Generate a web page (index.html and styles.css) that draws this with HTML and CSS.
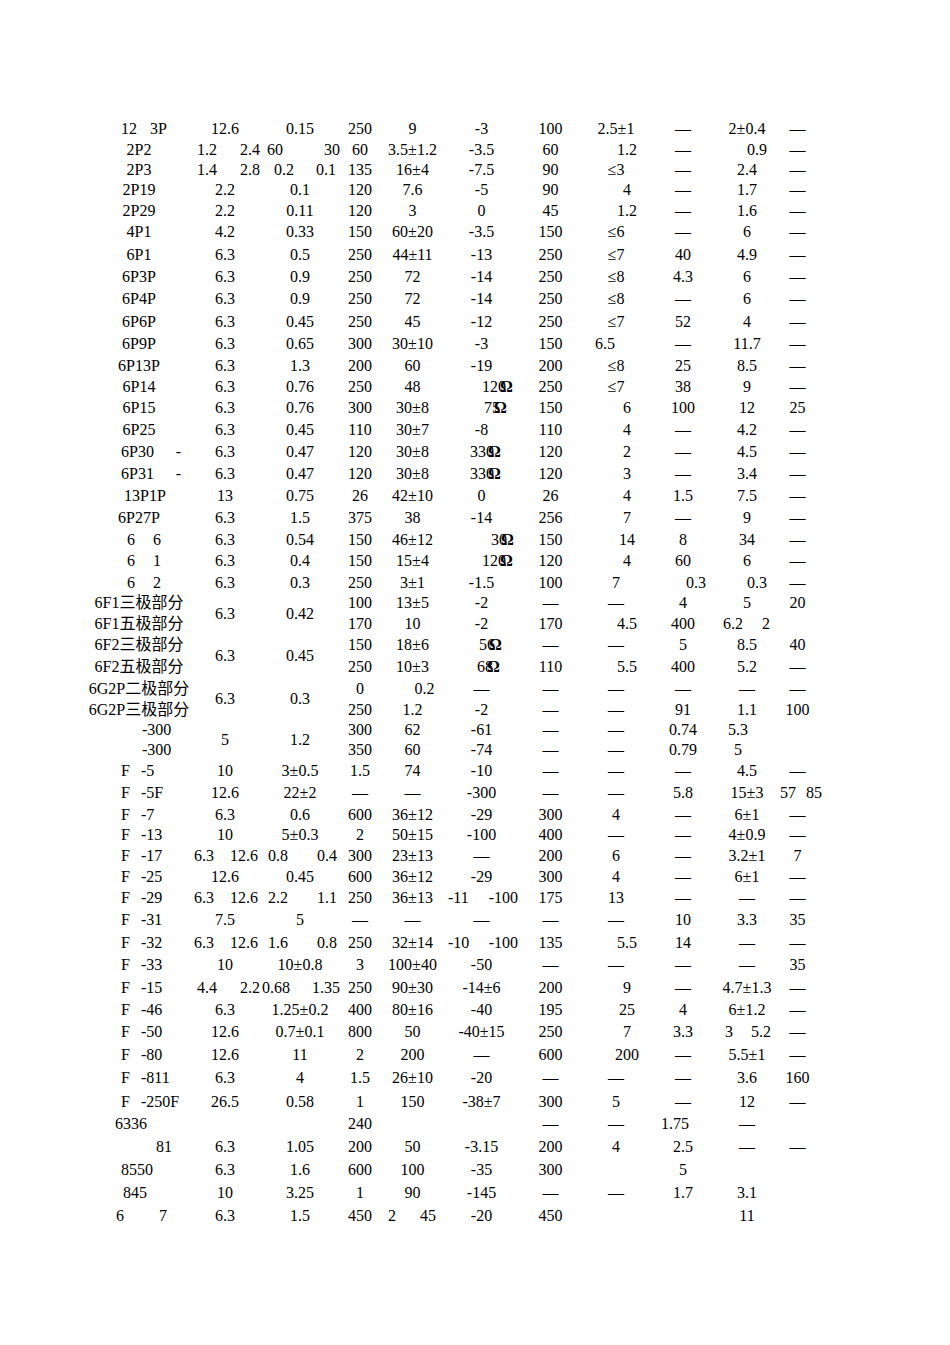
FILE: index.html
```html
<!DOCTYPE html>
<html lang="zh">
<head>
<meta charset="utf-8">
<title>电子管参数表</title>
<link rel="stylesheet" href="styles.css">
</head>
<body>
<table class="sheet">
<colgroup>
<col class="w102"><col class="w70"><col class="w80"><col class="w40"><col class="w65"><col class="w73"><col class="w65"><col class="w66"><col class="w68"><col class="w60"><col class="w41">
</colgroup>
<tbody>
<tr class="h21"><td><div class="two pl33 pr23"><span>12</span><span>3P</span></div></td><td>12.6</td><td>0.15</td><td>250</td><td>9</td><td>-3</td><td>100</td><td>2.5±1</td><td>—</td><td>2±0.4</td><td>—</td></tr>
<tr class="h21"><td>2P2</td><td><div class="two pl7"><span>1.2</span><span>2.4</span></div></td><td><div class="two pl7"><span>60</span><span>30</span></div></td><td>60</td><td>3.5±1.2</td><td>-3.5</td><td>60</td><td class="pl22">1.2</td><td>—</td><td class="pl20">0.9</td><td>—</td></tr>
<tr class="h20"><td>2P3</td><td><div class="two pl7"><span>1.4</span><span>2.8</span></div></td><td><div class="two pl14 pr4"><span>0.2</span><span>0.1</span></div></td><td>135</td><td>16±4</td><td>-7.5</td><td>90</td><td>≤3</td><td>—</td><td>2.4</td><td>—</td></tr>
<tr class="h20"><td>2P19</td><td>2.2</td><td>0.1</td><td>120</td><td>7.6</td><td>-5</td><td>90</td><td class="pl22">4</td><td>—</td><td>1.7</td><td>—</td></tr>
<tr class="h21"><td>2P29</td><td>2.2</td><td>0.11</td><td>120</td><td>3</td><td>0</td><td>45</td><td class="pl22">1.2</td><td>—</td><td>1.6</td><td>—</td></tr>
<tr class="h22"><td>4P1</td><td>4.2</td><td>0.33</td><td>150</td><td>60±20</td><td>-3.5</td><td>150</td><td>≤6</td><td>—</td><td>6</td><td>—</td></tr>
<tr class="h23"><td>6P1</td><td>6.3</td><td>0.5</td><td>250</td><td>44±11</td><td>-13</td><td>250</td><td>≤7</td><td>40</td><td>4.9</td><td>—</td></tr>
<tr class="h22"><td>6P3P</td><td>6.3</td><td>0.9</td><td>250</td><td>72</td><td>-14</td><td>250</td><td>≤8</td><td>4.3</td><td>6</td><td>—</td></tr>
<tr class="h22"><td>6P4P</td><td>6.3</td><td>0.9</td><td>250</td><td>72</td><td>-14</td><td>250</td><td>≤8</td><td>—</td><td>6</td><td>—</td></tr>
<tr class="h23"><td>6P6P</td><td>6.3</td><td>0.45</td><td>250</td><td>45</td><td>-12</td><td>250</td><td>≤7</td><td>52</td><td>4</td><td>—</td></tr>
<tr class="h22"><td>6P9P</td><td>6.3</td><td>0.65</td><td>300</td><td>30±10</td><td>-3</td><td>150</td><td class="pr22">6.5</td><td>—</td><td>11.7</td><td>—</td></tr>
<tr class="h21"><td>6P13P</td><td>6.3</td><td>1.3</td><td>200</td><td>60</td><td>-19</td><td>200</td><td>≤8</td><td>25</td><td>8.5</td><td>—</td></tr>
<tr class="h21"><td>6P14</td><td>6.3</td><td>0.76</td><td>250</td><td>48</td><td class="l pl37">12<span class="ov">0</span><b class="om">Ω</b></td><td>250</td><td>≤7</td><td>38</td><td>9</td><td>—</td></tr>
<tr class="h22"><td>6P15</td><td>6.3</td><td>0.76</td><td>300</td><td>30±8</td><td class="l pl39">7<span class="ov">5</span><b class="om">Ω</b></td><td>150</td><td class="pl22">6</td><td>100</td><td>12</td><td>25</td></tr>
<tr class="h22"><td>6P25</td><td>6.3</td><td>0.45</td><td>110</td><td>30±7</td><td>-8</td><td>110</td><td class="pl22">4</td><td>—</td><td>4.2</td><td>—</td></tr>
<tr class="h22"><td><div class="two pl33 pr9"><span>6P30</span><span>-</span></div></td><td>6.3</td><td>0.47</td><td>120</td><td>30±8</td><td class="l pl25">33<span class="ov">0</span><b class="om">Ω</b></td><td>120</td><td class="pl22">2</td><td>—</td><td>4.5</td><td>—</td></tr>
<tr class="h22"><td><div class="two pl33 pr9"><span>6P31</span><span>-</span></div></td><td>6.3</td><td>0.47</td><td>120</td><td>30±8</td><td class="l pl25">33<span class="ov">0</span><b class="om">Ω</b></td><td>120</td><td class="pl22">3</td><td>—</td><td>3.4</td><td>—</td></tr>
<tr class="h22"><td class="pl12">13P1P</td><td>13</td><td>0.75</td><td>26</td><td>42±10</td><td>0</td><td>26</td><td class="pl22">4</td><td>1.5</td><td>7.5</td><td>—</td></tr>
<tr class="h22"><td>6P27P</td><td>6.3</td><td>1.5</td><td>375</td><td>38</td><td>-14</td><td>256</td><td class="pl22">7</td><td>—</td><td>9</td><td>—</td></tr>
<tr class="h21"><td><div class="two pl39 pr29"><span>6</span><span>6</span></div></td><td>6.3</td><td>0.54</td><td>150</td><td>46±12</td><td class="l pl46">3<span class="ov">0</span><b class="om">Ω</b></td><td>150</td><td class="pl22">14</td><td>8</td><td>34</td><td>—</td></tr>
<tr class="h22"><td><div class="two pl39 pr29"><span>6</span><span>1</span></div></td><td>6.3</td><td>0.4</td><td>150</td><td>15±4</td><td class="l pl37">12<span class="ov">0</span><b class="om">Ω</b></td><td>120</td><td class="pl22">4</td><td>60</td><td>6</td><td>—</td></tr>
<tr class="h21"><td><div class="two pl39 pr29"><span>6</span><span>2</span></div></td><td>6.3</td><td>0.3</td><td>250</td><td>3±1</td><td>-1.5</td><td>100</td><td>7</td><td class="pl26">0.3</td><td class="pl20">0.3</td><td>—</td></tr>
<tr class="h20"><td>6F1三极部分</td><td rowspan="2">6.3</td><td rowspan="2">0.42</td><td>100</td><td>13±5</td><td>-2</td><td>—</td><td>—</td><td>4</td><td>5</td><td>20</td></tr>
<tr class="h21"><td>6F1五极部分</td><td>170</td><td>10</td><td>-2</td><td>170</td><td class="pl22">4.5</td><td>400</td><td><div class="two pl6 pr7"><span>6.2</span><span>2</span></div></td><td></td></tr>
<tr class="h21"><td>6F2三极部分</td><td rowspan="2">6.3</td><td rowspan="2">0.45</td><td>150</td><td>18±6</td><td class="l pl34">5<span class="ov">6</span><b class="om">Ω</b></td><td>—</td><td>—</td><td>5</td><td>8.5</td><td>40</td></tr>
<tr class="h23"><td>6F2五极部分</td><td>250</td><td>10±3</td><td class="l pl32">6<span class="ov">8</span><b class="om">Ω</b></td><td>110</td><td class="pl22">5.5</td><td>400</td><td>5.2</td><td>—</td></tr>
<tr class="h22"><td>6G2P二极部分</td><td rowspan="2">6.3</td><td rowspan="2">0.3</td><td>0</td><td class="pl24">0.2</td><td>—</td><td>—</td><td>—</td><td>—</td><td>—</td><td>—</td></tr>
<tr class="h20"><td>6G2P三极部分</td><td>250</td><td>1.2</td><td>-2</td><td>—</td><td>—</td><td>91</td><td>1.1</td><td>100</td></tr>
<tr class="h20"><td class="l pl54">-300</td><td rowspan="2">5</td><td rowspan="2">1.2</td><td>300</td><td>62</td><td>-61</td><td>—</td><td>—</td><td>0.74</td><td class="pr18">5.3</td><td></td></tr>
<tr class="h20"><td class="l pl54">-300</td><td>350</td><td>60</td><td>-74</td><td>—</td><td>—</td><td>0.79</td><td class="pr18">5</td><td></td></tr>
<tr class="h21"><td class="l pl33">F<span class="g11"></span>-5</td><td>10</td><td>3±0.5</td><td>1.5</td><td>74</td><td>-10</td><td>—</td><td>—</td><td>—</td><td>4.5</td><td>—</td></tr>
<tr class="h23"><td class="l pl33">F<span class="g11"></span>-5F</td><td>12.6</td><td>22±2</td><td>—</td><td>—</td><td>-300</td><td>—</td><td>—</td><td>5.8</td><td>15±3</td><td><div class="two pl3 mr4"><span>57</span><span>85</span></div></td></tr>
<tr class="h21"><td class="l pl33">F<span class="g11"></span>-7</td><td>6.3</td><td>0.6</td><td>600</td><td>36±12</td><td>-29</td><td>300</td><td>4</td><td>—</td><td>6±1</td><td>—</td></tr>
<tr class="h20"><td class="l pl33">F<span class="g11"></span>-13</td><td>10</td><td>5±0.3</td><td>2</td><td>50±15</td><td>-100</td><td>400</td><td>—</td><td>—</td><td>4±0.9</td><td>—</td></tr>
<tr class="h21"><td class="l pl33">F<span class="g11"></span>-17</td><td><div class="two pl4 pr2"><span>6.3</span><span>12.6</span></div></td><td><div class="two pl8 pr3"><span>0.8</span><span>0.4</span></div></td><td>300</td><td>23±13</td><td>—</td><td>200</td><td>6</td><td>—</td><td>3.2±1</td><td>7</td></tr>
<tr class="h21"><td class="l pl33">F<span class="g11"></span>-25</td><td>12.6</td><td>0.45</td><td>600</td><td>36±12</td><td>-29</td><td>300</td><td>4</td><td>—</td><td>6±1</td><td>—</td></tr>
<tr class="h22"><td class="l pl33">F<span class="g11"></span>-29</td><td><div class="two pl4 pr2"><span>6.3</span><span>12.6</span></div></td><td><div class="two pl8 pr3"><span>2.2</span><span>1.1</span></div></td><td>250</td><td>36±13</td><td><div class="two pl3"><span>-11</span><span>-100</span></div></td><td>175</td><td>13</td><td>—</td><td>—</td><td>—</td></tr>
<tr class="h22"><td class="l pl33">F<span class="g11"></span>-31</td><td>7.5</td><td>5</td><td>—</td><td>—</td><td>—</td><td>—</td><td>—</td><td>10</td><td>3.3</td><td>35</td></tr>
<tr class="h23"><td class="l pl33">F<span class="g11"></span>-32</td><td><div class="two pl4 pr2"><span>6.3</span><span>12.6</span></div></td><td><div class="two pl8 pr3"><span>1.6</span><span>0.8</span></div></td><td>250</td><td>32±14</td><td><div class="two pl3"><span>-10</span><span>-100</span></div></td><td>135</td><td class="pl22">5.5</td><td>14</td><td>—</td><td>—</td></tr>
<tr class="h22"><td class="l pl33">F<span class="g11"></span>-33</td><td>10</td><td>10±0.8</td><td>3</td><td>100±40</td><td>-50</td><td>—</td><td>—</td><td>—</td><td>—</td><td>35</td></tr>
<tr class="h23"><td class="l pl33">F<span class="g11"></span>-15</td><td><div class="two pl7"><span>4.4</span><span>2.2</span></div></td><td><div class="two pl2"><span>0.68</span><span>1.35</span></div></td><td>250</td><td>90±30</td><td>-14±6</td><td>200</td><td class="pl22">9</td><td>—</td><td>4.7±1.3</td><td>—</td></tr>
<tr class="h22"><td class="l pl33">F<span class="g11"></span>-46</td><td>6.3</td><td>1.25±0.2</td><td>400</td><td>80±16</td><td>-40</td><td>195</td><td class="pl22">25</td><td>4</td><td>6±1.2</td><td>—</td></tr>
<tr class="h22"><td class="l pl33">F<span class="g11"></span>-50</td><td>12.6</td><td>0.7±0.1</td><td>800</td><td>50</td><td>-40±15</td><td>250</td><td class="pl22">7</td><td>3.3</td><td><div class="two pl8 pr6"><span>3</span><span>5.2</span></div></td><td>—</td></tr>
<tr class="h23"><td class="l pl33">F<span class="g11"></span>-80</td><td>12.6</td><td>11</td><td>2</td><td>200</td><td>—</td><td>600</td><td class="pl22">200</td><td>—</td><td>5.5±1</td><td>—</td></tr>
<tr class="h24"><td class="l pl33">F<span class="g11"></span>-811</td><td>6.3</td><td>4</td><td>1.5</td><td>26±10</td><td>-20</td><td>—</td><td>—</td><td>—</td><td>3.6</td><td>160</td></tr>
<tr class="h23"><td class="l pl33">F<span class="g11"></span>-250F</td><td>26.5</td><td>0.58</td><td>1</td><td>150</td><td>-38±7</td><td>300</td><td>5</td><td>—</td><td>12</td><td>—</td></tr>
<tr class="h22"><td class="l pl27">6336</td><td></td><td></td><td>240</td><td></td><td></td><td>—</td><td>—</td><td class="pr16">1.75</td><td>—</td><td></td></tr>
<tr class="h23"><td class="l pl68">81</td><td>6.3</td><td>1.05</td><td>200</td><td>50</td><td>-3.15</td><td>200</td><td>4</td><td>2.5</td><td>—</td><td>—</td></tr>
<tr class="h23"><td class="l pl33">8550</td><td>6.3</td><td>1.6</td><td>600</td><td>100</td><td>-35</td><td>300</td><td></td><td>5</td><td></td><td></td></tr>
<tr class="h23"><td class="l pl35">845</td><td>10</td><td>3.25</td><td>1</td><td>90</td><td>-145</td><td>—</td><td>—</td><td>1.7</td><td>3.1</td><td></td></tr>
<tr class="h23"><td><div class="two pl28 pr23"><span>6</span><span>7</span></div></td><td>6.3</td><td>1.5</td><td>450</td><td><div class="two pl8 pr9"><span>2</span><span>45</span></div></td><td>-20</td><td>450</td><td></td><td></td><td>11</td><td></td></tr>
</tbody>
</table>
</body>
</html>
```
FILE: styles.css
```css
html, body {
  margin: 0;
  padding: 0;
  background: #ffffff;
}

body {
  font-family: "Liberation Serif", "Noto Sans CJK SC", serif;
  font-size: 16px;
  color: #000000;
}

.sheet {
  table-layout: fixed;
  width: 730px;
  border-collapse: collapse;
  border-spacing: 0;
  margin: 118px 0 0 88px;
}

.w102 { width: 102px; }
.w70 { width: 70px; }
.w80 { width: 80px; }
.w40 { width: 40px; }
.w65 { width: 65px; }
.w73 { width: 73px; }
.w66 { width: 66px; }
.w68 { width: 68px; }
.w60 { width: 60px; }
.w41 { width: 41px; }

.sheet td {
  padding: 0;
  text-align: center;
  white-space: nowrap;
  vertical-align: middle;
  line-height: 18px;
}

.h20 { height: 20px; }
.h21 { height: 21px; }
.h22 { height: 22px; }
.h23 { height: 23px; }
.h24 { height: 24px; }

.sheet .l { text-align: left; }

.two {
  display: flex;
  justify-content: space-between;
}

.sheet .pl2 { padding-left: 2px; }
.sheet .pl3 { padding-left: 3px; }
.sheet .pl4 { padding-left: 4px; }
.sheet .pl6 { padding-left: 6px; }
.sheet .pl7 { padding-left: 7px; }
.sheet .pl8 { padding-left: 8px; }
.sheet .pl12 { padding-left: 12px; }
.sheet .pl14 { padding-left: 14px; }
.sheet .pl20 { padding-left: 20px; }
.sheet .pl22 { padding-left: 22px; }
.sheet .pl24 { padding-left: 24px; }
.sheet .pl25 { padding-left: 25px; }
.sheet .pl26 { padding-left: 26px; }
.sheet .pl27 { padding-left: 27px; }
.sheet .pl28 { padding-left: 28px; }
.sheet .pl32 { padding-left: 32px; }
.sheet .pl33 { padding-left: 33px; }
.sheet .pl34 { padding-left: 34px; }
.sheet .pl35 { padding-left: 35px; }
.sheet .pl37 { padding-left: 37px; }
.sheet .pl39 { padding-left: 39px; }
.sheet .pl46 { padding-left: 46px; }
.sheet .pl54 { padding-left: 54px; }
.sheet .pl68 { padding-left: 68px; }

.sheet .pr2 { padding-right: 2px; }
.sheet .pr3 { padding-right: 3px; }
.sheet .pr4 { padding-right: 4px; }
.sheet .pr6 { padding-right: 6px; }
.sheet .pr7 { padding-right: 7px; }
.sheet .pr9 { padding-right: 9px; }
.sheet .pr16 { padding-right: 16px; }
.sheet .pr18 { padding-right: 18px; }
.sheet .pr22 { padding-right: 22px; }
.sheet .pr23 { padding-right: 23px; }
.sheet .pr29 { padding-right: 29px; }

.mr4 { margin-right: -4px; }

.g11 {
  display: inline-block;
  width: 11px;
}

/* the last digit sits under the ohm sign, as in the printed sheet */
.ov {
  letter-spacing: -6px;
}

.om {
  font-weight: bold;
}
```
